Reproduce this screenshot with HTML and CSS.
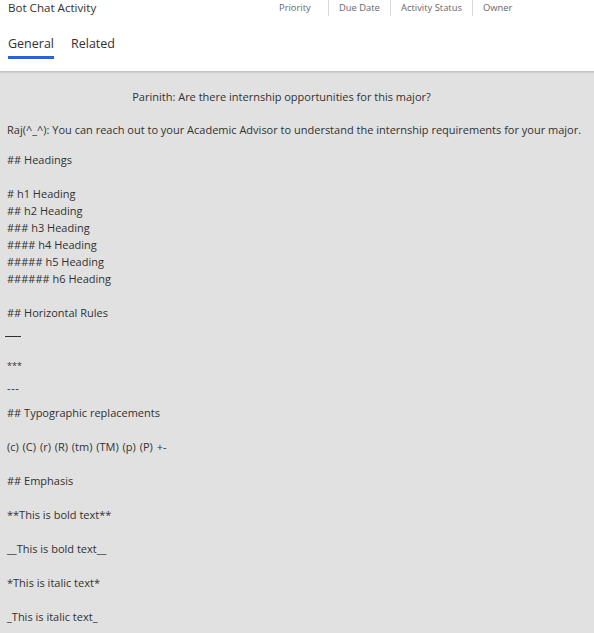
FILE: index.html
```html
<!DOCTYPE html>
<html lang="en">
<head>
<meta charset="utf-8">
<title>Bot Chat Activity</title>
<link rel="stylesheet" href="styles.css">
</head>
<body>
<header class="header">
  <div class="top-row">
    <div class="title">Bot Chat Activity</div>
    <div class="fields">
      <div class="field field-priority">Priority</div>
      <div class="field field-due">Due Date</div>
      <div class="field field-status">Activity Status</div>
      <div class="field field-owner">Owner</div>
    </div>
  </div>
  <nav class="tabs">
    <div class="tab tab-active">General</div>
    <div class="tab">Related</div>
  </nav>
</header>
<main class="content">
  <div class="line center">Parinith: Are there internship opportunities for this major?</div>
  <div class="line gap-raj">Raj(^_^): You can reach out to your Academic Advisor to understand the internship requirements for your major.</div>
  <div class="line gap-headings">## Headings</div>
  <div class="line gap-para"># h1 Heading</div>
  <div class="line">## h2 Heading</div>
  <div class="line">### h3 Heading</div>
  <div class="line">#### h4 Heading</div>
  <div class="line">##### h5 Heading</div>
  <div class="line">###### h6 Heading</div>
  <div class="line gap-para">## Horizontal Rules</div>
  <div class="rule-line"></div>
  <div class="line stars">***</div>
  <div class="line dashes">---</div>
  <div class="line gap-typo">## Typographic replacements</div>
  <div class="line gap-para typo">(c) (C) (r) (R) (tm) (TM) (p) (P) +-</div>
  <div class="line gap-para">## Emphasis</div>
  <div class="line gap-para">**This is bold text**</div>
  <div class="line gap-para">__This is bold text__</div>
  <div class="line gap-para">*This is italic text*</div>
  <div class="line gap-para">_This is italic text_</div>
</main>
</body>
</html>
```

FILE: styles.css
```css
* { box-sizing: border-box; }

html, body {
  margin: 0;
  padding: 0;
  height: 100%;
}

body {
  font-family: "Open Sans", "Noto Sans", sans-serif;
  color: #323130;
  background: #e1e1e1;
  overflow: hidden;
}

.header {
  background: #ffffff;
  height: 72px;
  border-bottom: 1px solid #c4c4c4;
  box-shadow: 0 1px 1px rgba(0, 0, 0, 0.08);
}

.top-row {
  display: flex;
  align-items: flex-start;
  height: 16px;
}

.title {
  flex: 1;
  padding-left: 8px;
  font-size: 11.6px;
  line-height: 16px;
  color: #323130;
}

.fields {
  display: flex;
  margin-right: 40px;
}

.field {
  font-size: 9.4px;
  line-height: 16px;
  color: #69676a;
  padding-left: 10px;
  border-left: 1px solid #d8d8d8;
  height: 16px;
}

.field-priority { width: 59px; border-left: none; }
.field-due { width: 62px; }
.field-status { width: 82px; }
.field-owner { width: 82px; }

.tabs {
  display: flex;
  gap: 17px;
  padding-left: 8px;
  margin-top: 19px;
}

.tab {
  font-size: 12.5px;
  line-height: 18px;
  padding-bottom: 3px;
  color: #323130;
  border-bottom: 3px solid transparent;
}

.tab-active {
  border-bottom-color: #2266e3;
}

.content {
  padding: 16px 0 0 7px;
  font-size: 11px;
}

.line {
  line-height: 17px;
  height: 17px;
  white-space: nowrap;
}

.center {
  text-align: center;
  padding-right: 38px;
}

.typo { word-spacing: 1px; }

.gap-raj { margin-top: 16px; }
.gap-headings { margin-top: 13px; }
.gap-para { margin-top: 17px; }

.rule-line {
  width: 16px;
  height: 1px;
  background: #323130;
  margin-top: 15px;
  margin-left: -2px;
}

.stars {
  font-size: 9px;
  margin-top: 20px;
}

.dashes {
  letter-spacing: 0.6px;
  margin-top: 5px;
}

.gap-typo { margin-top: 8px; }
```
